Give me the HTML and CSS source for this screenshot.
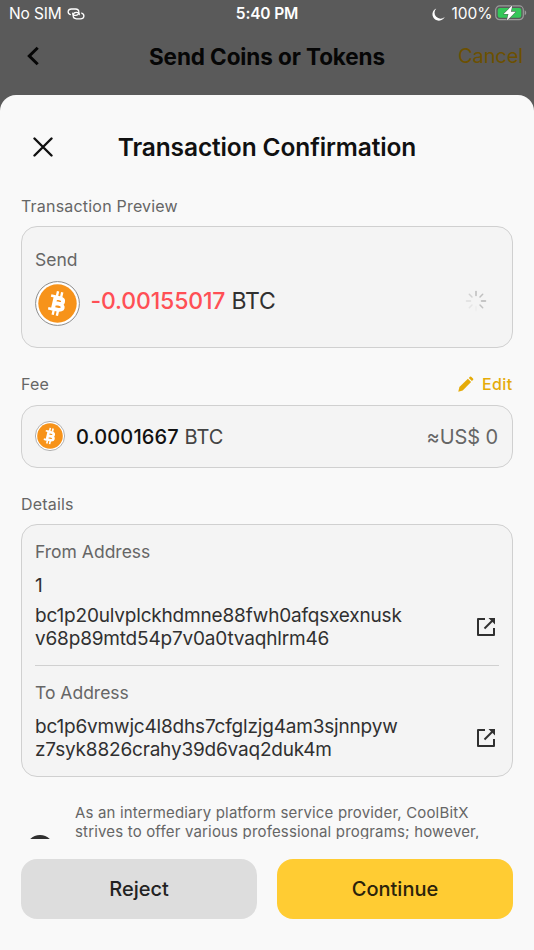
FILE: index.html
```html
<!DOCTYPE html>
<html lang="en">
<head>
<meta charset="utf-8">
<title>Transaction Confirmation</title>
<link rel="stylesheet" href="styles.css">
</head>
<body>
<svg class="defs" width="0" height="0" aria-hidden="true">
  <symbol id="btc" viewBox="0 0 45 45">
    <circle cx="22.5" cy="22.5" r="21.9" fill="#fff" stroke="#8c8c8c" stroke-width="1"/>
    <circle cx="22.5" cy="22.5" r="19.2" fill="#f7931a"/>
    <g transform="rotate(13 22.5 22.5)" fill="none" stroke="#fff">
      <path stroke-width="2.4" d="M20.3 10.500v5M24.6 10.500v5M20.3 29.500v5M24.600 29.500v5"/>
      <path stroke-width="2.500" d="M14.500 16.200H19M14.500 29.200H19"/>
      <path stroke-width="3.900" stroke-linejoin="round" d="M19.200 16.900H23.500C28.900 16.900 28.900 22.500 23.500 22.500H19.200M23.500 22.500C30.200 22.500 30.200 28.500 23.500 28.500H19.200M19.200 15.200V30.300"/>
    </g>
  </symbol>
  <symbol id="open" viewBox="0 0 20 20">
    <path fill="none" stroke="#303030" stroke-width="2" stroke-linejoin="round" d="M9 2H2V18H18V11"/>
    <path fill="none" stroke="#303030" stroke-width="2" d="M8.500 11.500L16.500 3.500"/>
    <path fill="#303030" d="M12.500 1H19V7.500L16.800 5.300L14.700 3.200Z"/>
  </symbol>
</svg>
<div class="screen">
  <header class="status">
    <div class="status-left"><span class="carrier">No SIM</span>
      <svg class="link" viewBox="0 0 18 12" fill="none" stroke="#fff" stroke-width="1.300" stroke-linecap="round"><path d="M3.300 6.600C.2 5.400 .3 1 4.500 1H8.500C13 1 13 7.400 8.500 7.400C6.800 7.400 5.700 6.400 5.700 5.200"/><path d="M14.700 5.100C17.900 6.300 17.700 10.800 13.500 10.800H9.500C5 10.800 5 4.400 9.500 4.400C11.200 4.400 12.300 5.400 12.300 6.600"/></svg>
    </div>
    <div class="clock">5:40 PM</div>
    <div class="status-right">
      <svg class="moon" viewBox="0 0 13 13"><path fill="#fff" d="M4.300.4A6.400 6.400 0 1 0 12.700 8.900A5.900 5.900 0 0 1 4.300.4Z"/></svg>
      <span class="percent">100%</span>
      <svg class="battery" viewBox="0 0 32 16"><rect x=".7" y=".9" width="27.600" height="13.800" rx="4" fill="none" stroke="#9b9b9b" stroke-width="1.200"/><rect x="2.700" y="2.900" width="23.600" height="9.800" rx="2.200" fill="#34c759"/><path fill="#9b9b9b" d="M29.700 5.300C31.700 6 31.700 9.600 29.700 10.300Z"/><path fill="#fff" stroke="#5a5a5a" stroke-width="1" paint-order="stroke" d="M17.400.3L8.600 8.900H13.400L11.800 15.600L20.700 6.800H15.900Z"/></svg>
    </div>
  </header>
  <nav class="nav">
    <svg class="back" viewBox="0 0 14 20"><path fill="none" stroke="#060606" stroke-width="3" d="M11.700 1.800L3.300 10L11.700 18.200"/></svg>
    <div class="nav-title">Send Coins or Tokens</div>
    <div class="cancel">Cancel</div>
  </nav>
  <main class="sheet">
    <div class="sheet-head">
      <svg class="close" viewBox="0 0 20 20"><path stroke="#111" stroke-width="2.400" stroke-linecap="round" d="M1.500 1.500L18.500 18.500M18.500 1.500L1.500 18.500"/></svg>
      <h1>Transaction Confirmation</h1>
    </div>
    <div class="content">
      <div class="label">Transaction Preview</div>
      <section class="card send">
        <div class="sub send-label">Send</div>
        <div class="row">
          <svg class="coin-lg"><use href="#btc"/></svg>
          <div class="amount"><span class="neg">-0.00155017</span> <span class="unit">BTC</span></div>
          <svg class="spinner" viewBox="0 0 22 22" stroke-width="1.500" stroke-linecap="round"><path stroke="#bcbcbc" d="M11 1.500V5.500"/><path stroke="#c0c0c0" d="M15 7L17.700 4.300"/><path stroke="#b5b5b5" d="M16.500 11H20.500"/><path stroke="#c2c2c2" d="M15 15L17.700 17.700"/><path stroke="#eeeeee" d="M11 16.500V20.500"/><path stroke="#e5e5e5" d="M7 15L4.300 17.700"/><path stroke="#dddddd" d="M5.500 11H1.500"/><path stroke="#d2d2d2" d="M7 7L4.300 4.300"/></svg>
        </div>
      </section>
      <div class="label label-row"><span class="fee-label">Fee</span>
        <span class="edit"><svg class="pencil" viewBox="0 0 16 16" fill="#e5ab08"><path d="M.3 15.700L1.400 11L9.900 2.800L13.100 6L4.700 14.500Z"/><path d="M10.800 1.900L11.900.8Q12.700.1 13.500.9L15 2.400Q15.800 3.200 15 4L13.900 5.100Z"/></svg><span class="edit-text">Edit</span></span>
      </div>
      <section class="card fee">
        <svg class="coin-sm"><use href="#btc"/></svg>
        <div class="fee-amount"><span class="fee-num">0.0001667</span> <span class="fee-unit">BTC</span></div>
        <div class="fiat">≈US$ 0</div>
      </section>
      <div class="label details-label">Details</div>
      <section class="card details">
        <div class="from">
          <div class="sub from-label">From Address</div>
          <div class="index">1</div>
          <div class="address"><div>bc1p20ulvplckhdmne88fwh0afqsxexnusk<br>v68p89mtd54p7v0a0tvaqhlrm46</div><svg class="open"><use href="#open"/></svg></div>
        </div>
        <div class="to">
          <div class="sub to-label">To Address</div>
          <div class="address"><div>bc1p6vmwjc4l8dhs7cfglzjg4am3sjnnpyw<br>z7syk8826crahy39d6vaq2duk4m</div><svg class="open"><use href="#open"/></svg></div>
        </div>
      </section>
      <div class="notice">
        <svg class="check" viewBox="0 0 28 28"><circle cx="14" cy="14" r="14" fill="#303030"/></svg>
        <p>As an intermediary platform service provider, CoolBitX<br>strives to offer various professional programs; however,</p>
      </div>
    </div>
    <footer class="actions"><button class="reject">Reject</button><button class="continue">Continue</button></footer>
  </main>
</div>
</body>
</html>
```

FILE: styles.css
```css
* { box-sizing: border-box; }
body { margin: 0; background: #5a5a5a; font-family: Inter, "Liberation Sans", sans-serif; color: #303030; }
svg { display: block; flex: none; }
.defs { position: absolute; }
.screen { width: 534px; height: 950px; overflow: hidden; display: flex; flex-direction: column; background: #5a5a5a; white-space: nowrap; }

.status { height: 28px; display: grid; grid-template-columns: 1fr auto 1fr; align-items: center; padding: 0 7px 0 9px; color: #fff; font-size: 15.5px; line-height: 28px; letter-spacing: -.15px; }
.status-left, .status-right { display: flex; align-items: center; }
.status-left { gap: 5px; }
.status-right { justify-content: flex-end; letter-spacing: 0; }
.link { width: 18px; height: 12px; }
.clock { font-weight: 600; margin-right: 2px; }
.moon { width: 13px; height: 13px; margin-right: 6px; }
.battery { width: 32px; height: 16px; margin-left: 2.5px; margin-top: -2px; }

.nav { height: 67px; padding: 0 11px 11px 26px; display: grid; grid-template-columns: 110px 1fr 124px; align-items: center; }
.back { width: 14px; height: 20px; }
.nav-title { justify-self: center; font-weight: 700; font-size: 22.5px; letter-spacing: -.1px; color: #060606; margin-left: -1px; }
.cancel { justify-self: end; font-size: 20px; letter-spacing: -.1px; color: #6c5000; }

.sheet { flex: 1; min-height: 0; display: flex; flex-direction: column; background: #f9f9f9; border-radius: 16px 16px 0 0; padding: 0 21px; }
.sheet-head { height: 102px; display: grid; grid-template-columns: 40px 1fr 40px; align-items: center; padding: 2px 12px 0; }
.close { width: 20px; height: 20px; }
h1 { margin: 0; justify-self: center; font-size: 24.5px; font-weight: 600; letter-spacing: -.12px; color: #111; }

.content { height: 642px; overflow: hidden; }
.label { height: 29px; line-height: 18px; font-size: 16px; letter-spacing: .2px; color: #666; }
.label-row { display: flex; justify-content: space-between; margin-top: 27px; height: 30px; }
.edit { display: flex; align-items: center; height: 18px; gap: 7.5px; color: #e5ab08; font-weight: 500; letter-spacing: .4px; }
.edit-text { margin-right: .5px; }
.pencil { width: 16px; height: 16px; }
.details-label { margin-top: 27px; }
.card { background: #f4f4f4; border: 1px solid #d0d0d0; border-radius: 16px; padding: 0 13px; }
.send { height: 122px; padding-top: 21px; }
.sub { color: #666; font-size: 17.5px; line-height: 24px; }
.row { display: flex; align-items: center; margin-top: 9px; height: 45px; }
.coin-lg { width: 45px; height: 45px; }
.amount { margin-left: 10.5px; font-size: 23px; line-height: 40px; margin-top: -5px; letter-spacing: -.15px; }
.neg { color: #ff4f55; font-weight: 500; }
.unit { letter-spacing: -.3px; }
.spinner { width: 22px; height: 22px; margin: -5px 12px 0 auto; }
.fee { height: 63px; display: flex; align-items: center; }
.coin-sm { width: 30px; height: 30px; margin-top: -1px; }
.fee-amount { margin-left: 11px; font-size: 20px; }
.fee-num { font-weight: 500; color: #111; letter-spacing: .15px; }
.fee-unit { color: #444; }
.fiat { margin-left: auto; margin-right: 1px; font-size: 20px; letter-spacing: -.1px; color: #666; }
.details { height: 253px; }
.from { height: 141px; padding-top: 15px; border-bottom: 1px solid #d0d0d0; }
.index { margin-top: 10px; line-height: 24px; font-size: 19px; }
.address { display: flex; align-items: center; justify-content: space-between; font-size: 19px; line-height: 23px; letter-spacing: -.18px; padding-right: 3px; margin-top: 6px; }
.open { width: 20px; height: 20px; margin-top: -1px; }
.to { padding-top: 15px; }
.to .address { margin-top: 10px; }
.notice { display: flex; margin-top: 27px; height: 61px; }
.check { width: 28px; height: 28px; margin: 30.5px 21px 0 5px; }
.notice p { margin: 0; font-size: 15px; line-height: 18.6px; letter-spacing: .17px; color: #666; }

.actions { display: grid; grid-template-columns: 1fr 1fr; gap: 20px; padding-top: 20px; }
button { height: 60px; border: 0; border-radius: 16px; font: 500 20px/60px Inter, sans-serif; padding: 0; }
.reject { background: #ddd; color: #222; }
.continue { background: #ffcc33; color: #2b230b; }
```
